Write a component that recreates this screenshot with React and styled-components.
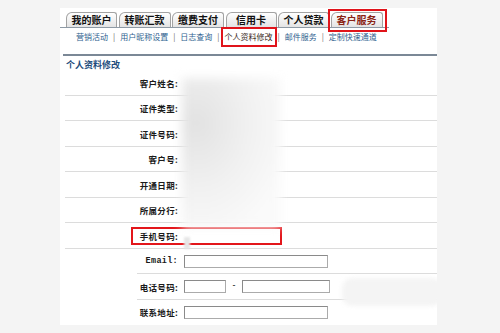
import React from "react";
import styled, { createGlobalStyle } from "styled-components";

const Global = createGlobalStyle`
  html, body {
    margin: 0;
    padding: 0;
    background: #f4f4f4;
  }
  body {
    font-family: "Noto Sans CJK SC", "Noto Sans", sans-serif;
  }
`;

const Page = styled.div`
  width: 500px;
  height: 333px;
  box-sizing: border-box;
  padding: 8px 0 0 60px;
  overflow: hidden;
`;

const Panel = styled.div`
  position: relative;
  width: 377px;
  height: 317px;
  background: #fff;
  overflow: hidden;
  display: flex;
  flex-direction: column;
`;

const TabBar = styled.div`
  display: flex;
  align-items: flex-end;
  gap: 1.5px;
  box-sizing: border-box;
  height: 20px;
  padding: 4px 0 0 6px;
  margin-right: 48px;
  border-bottom: 1px solid #8e9aa5;
`;

const Tab = styled.div`
  position: relative;
  width: ${(p) => p.$w}px;
  height: 15px;
  box-sizing: border-box;
  display: flex;
  align-items: center;
  justify-content: center;
  border: 1px solid #a3a3a3;
  border-bottom: none;
  border-radius: 6px 3px 0 0;
  background: linear-gradient(#ffffff, #e4e4e4);
  font-size: 10px;
  font-weight: 700;
  line-height: 1;
  color: ${(p) => (p.$active ? "#8a2416" : "#111")};

  &::after {
    content: "";
    display: ${(p) => (p.$active ? "block" : "none")};
    position: absolute;
    left: -4px;
    right: -5px;
    top: -4px;
    bottom: -5px;
    border: 2px solid #e0141b;
  }
`;

const SubNav = styled.div`
  height: 22px;
  display: flex;
  align-items: center;
  padding-left: 16px;
  font-size: 8px;
  color: #2f5f8f;
  white-space: nowrap;
`;

const NavItem = styled.span`
  display: inline-block;
  line-height: 12px;
  color: ${(p) => (p.$active ? "#3a2a22" : "#2f5f8f")};
  outline: ${(p) => (p.$active ? "2px solid #e0141b" : "none")};
  outline-offset: 2px;
`;

const Sep = styled.span`
  margin: 0 5px;
  color: #6a6a6a;
`;

const Divider = styled.div`
  height: 2px;
  margin: 9px 0 0 3px;
  background: #7b8896;
`;

const Heading = styled.div`
  height: 15px;
  box-sizing: border-box;
  padding: 4px 0 0 6px;
  font-size: 9px;
  font-weight: 700;
  line-height: 10px;
  color: #1d4c7c;
`;

const Rows = styled.div`
  margin-left: 5px;
`;

const Row = styled.div`
  position: relative;
  height: 25.5px;
  display: flex;
  align-items: center;

  &::after {
    content: "";
    display: ${(p) => (p.$line === "none" ? "none" : "block")};
    position: absolute;
    left: ${(p) => (p.$line === "short" ? 72 : 0)}px;
    right: 0;
    bottom: 0;
    height: 1px;
    background: #dcdcdc;
  }

  &::before {
    content: "";
    display: ${(p) => (p.$mark ? "block" : "none")};
    position: absolute;
    left: 66px;
    top: 4px;
    width: 151px;
    height: 18px;
    box-sizing: border-box;
    border: 2px solid #e3161b;
  }
`;

const Label = styled.div`
  width: 113px;
  flex-shrink: 0;
  text-align: right;
  font-size: 8.5px;
  font-weight: 700;
  color: #1a1a1a;
  letter-spacing: 0.3px;
  font-family: ${(p) =>
    p.$latin ? '"Liberation Mono", monospace' : '"Noto Sans CJK SC", sans-serif'};
`;

const Value = styled.div`
  margin-left: 6px;
  display: flex;
  align-items: center;
`;

const Input = styled.div`
  width: ${(p) => p.$w}px;
  height: 13px;
  box-sizing: border-box;
  border: 1px solid #ababab;
  border-top-color: #8a8a8a;
  border-left-color: #8a8a8a;
  background: #fff;
`;

const Dash = styled.span`
  width: 16px;
  text-align: center;
  font-size: 8px;
  font-weight: 700;
  color: #333;
  margin-top: -5px;
`;

const Blur = styled.div`
  position: absolute;
  left: ${(p) => p.$x}px;
  top: ${(p) => p.$y}px;
  width: ${(p) => p.$w}px;
  height: ${(p) => p.$h}px;
  border-radius: ${(p) => p.$r || 0}px;
  background: ${(p) => p.$bg};
  filter: blur(${(p) => p.$blur}px);
`;

const tabs = [
  ["我的账户", 51],
  ["转账汇款", 52],
  ["缴费支付", 52],
  ["信用卡", 51],
  ["个人贷款", 51],
  ["客户服务", 52],
];

const navs = ["营销活动", "用户昵称设置", "日志查询", "个人资料修改", "邮件服务", "定制快速通道"];

const plainRows = ["客户姓名:", "证件类型:", "证件号码:", "客户号:", "开通日期:", "所属分行:"];

export default function App() {
  return (
    <Page>
      <Global />
      <Panel>
        <TabBar>
          {tabs.map(([t, w]) => (
            <Tab key={t} $w={w} $active={t === "客户服务"}>
              {t}
            </Tab>
          ))}
        </TabBar>
        <SubNav>
          {navs.map((n, i) => (
            <React.Fragment key={n}>
              {i > 0 && <Sep>|</Sep>}
              <NavItem $active={n === "个人资料修改"}>{n}</NavItem>
            </React.Fragment>
          ))}
        </SubNav>
        <Divider />
        <Heading>个人资料修改</Heading>
        <Rows>
          {plainRows.map((r) => (
            <Row key={r} $line="full">
              <Label>{r}</Label>
            </Row>
          ))}
          <Row $line="full" $mark>
            <Label>手机号码:</Label>
          </Row>
          <Row $line="short">
            <Label $latin>Email:</Label>
            <Value>
              <Input $w={144} />
            </Value>
          </Row>
          <Row $line="short">
            <Label>电话号码:</Label>
            <Value>
              <Input $w={42} />
              <Dash>-</Dash>
              <Input $w={88} />
            </Value>
          </Row>
          <Row $line="none">
            <Label>联系地址:</Label>
            <Value>
              <Input $w={144} />
            </Value>
          </Row>
        </Rows>
        <Blur
          $x={122}
          $y={70}
          $w={99}
          $h={150}
          $blur={5}
          $bg="radial-gradient(ellipse at 15% 30%, #e2e2e2 0%, #f1f1f1 45%, #fafafa 80%), #f8f8f8"
        />
        <Blur $x={124} $y={229} $w={6} $h={12} $blur={1} $bg="#e6e6e6" />
        <Blur $x={282} $y={270} $w={100} $h={28} $r={10} $blur={2} $bg="#f4f4f4" />
      </Panel>
    </Page>
  );
}
